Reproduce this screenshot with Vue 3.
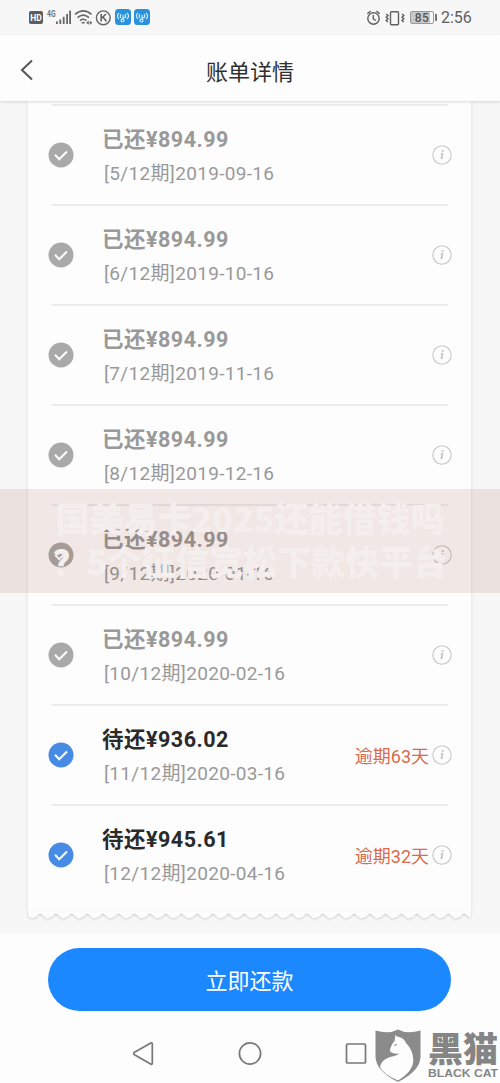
<script setup>
const bills = [
  { n: 5, date: '2019-09-16', amount: '894.99' },
  { n: 6, date: '2019-10-16', amount: '894.99' },
  { n: 7, date: '2019-11-16', amount: '894.99' },
  { n: 8, date: '2019-12-16', amount: '894.99' },
  { n: 9, date: '2020-01-16', amount: '894.99' },
  { n: 10, date: '2020-02-16', amount: '894.99' },
  { n: 11, date: '2020-03-16', amount: '936.02', late: 63 },
  { n: 12, date: '2020-04-16', amount: '945.61', late: 32 },
]
// Perforated lower edge of the bill card
const teeth = Array.from({ length: 28 }, (_, i) => {
  const x = 3 + i * 15.7
  return `Q${x + 4} 8 ${x + 7} 4 Q${x + 9} 1 ${x + 11.5} 4 L${x + 15} 7`
}).join(' ')
const edge = `M0 0 V5 L3 7 ${teeth} L443 5 V0 Z`
</script>

<template>
  <div class="screen">
    <header class="status">
      <svg class="status-left" width="126" height="20" viewBox="0 0 126 20">
        <rect x="1" y="3" width="14" height="13" rx="2" fill="#5c5c5c" />
        <text x="8" y="13" class="hd" text-anchor="middle">HD</text>
        <text x="19" y="9" class="g4" textLength="8.500" lengthAdjust="spacingAndGlyphs">4G</text>
        <g fill="#666">
          <rect x="28" y="13.4" width="1.8" height="2.6" /><rect x="31.4" y="11.5" width="1.8" height="4.5" />
          <rect x="34.8" y="8.8" width="1.8" height="7.2" /><rect x="38.2" y="6" width="1.8" height="10" />
          <rect x="41.2" y="2.6" width="1.8" height="13.4" />
        </g>
        <g fill="none" stroke="#666" stroke-width="1.6">
          <path d="M47 6.500Q55.300-.6 63.500 6.500M49.500 9.600Q55.300 4.500 61 9.600M52 12.600Q55.300 10 58.500 12.600" />
          <path d="M53.700 14.700h3" />
          <path d="M58.500 14.800l2-1.600v3zM64 14.800l-2-1.600v3z" stroke-width=".6" fill="#666" />
          <circle cx="75.300" cy="9.800" r="6.900" stroke-width="1.400" />
          <path d="M73.200 6v7.600M78 6l-4.600 4.300M75 9l3.500 4.600" />
        </g>
        <g v-for="x in [87, 106]" :key="x" :transform="`translate(${x} 1)`">
          <rect width="16" height="16" rx="3.500" fill="#2b91dc" />
          <g fill="none" stroke="#d6efff" stroke-width="1.100">
            <path d="M4 4Q.8 7 4 10M6 5Q4.300 7 6 9M12 4Q15.200 7 12 10M10 5Q11.700 7 10 9" />
            <path d="M8 6v5M8 8l2 1" /><circle cx="7.500" cy="11.500" r="1.500" />
          </g>
        </g>
      </svg>
      <div class="status-right">
        <svg width="39" height="18" viewBox="0 0 39 18" fill="none" stroke="#606060" stroke-width="1.400">
          <circle cx="7.500" cy="9.500" r="5.700" /><path d="M7.300 6v3.800l2.600 1.700M1.300 4.800l3.300-2.700M13.700 4.800l-3.300-2.700" />
          <rect x="24.500" y="2.700" width="8" height="13" rx="1" />
          <path d="M20.200 5l1.800 1.600-1.800 1.600 1.800 1.600-1.800 1.600 1.800 1.600M36 5l1.800 1.600L36 8.200l1.800 1.600-1.800 1.600 1.800 1.600" />
        </svg>
        <span class="battery"><b>85</b></span>
        <span class="clock">2:56</span>
      </div>
    </header>

    <nav class="title-bar">
      <svg class="back" width="14" height="22" viewBox="0 0 14 22"><path d="M12 1.500L2 11l10 9.500" fill="none" stroke="#555" stroke-width="2" /></svg>
      <h1>账单详情</h1>
    </nav>

    <main>
      <section class="card">
        <div v-for="b in bills" :key="b.n" class="bill" :class="{ due: b.late }">
          <svg class="check" width="26" height="26" viewBox="0 0 26 26">
            <circle cx="13" cy="13" r="12.500" />
            <path d="M7 12.800l4.200 4.400 7.800-7.700" fill="none" stroke="#fff" stroke-width="2" />
          </svg>
          <div class="info">
            <div class="amount">{{ b.late ? '待还' : '已还' }}¥{{ b.amount }}</div>
            <div class="date">[{{ b.n }}/12期]{{ b.date }}</div>
          </div>
          <span v-if="b.late" class="late">逾期{{ b.late }}天</span>
          <svg class="tip" width="20" height="20" viewBox="0 0 20 20">
            <circle cx="10" cy="10" r="9.200" fill="none" stroke="#c8c8c8" stroke-width="1.100" />
            <text x="10" y="14" text-anchor="middle">i</text>
          </svg>
        </div>
      </section>
      <svg class="edge" width="443" height="13" viewBox="0 0 443 13"><path :d="edge" fill="#fdfdfd" /></svg>
    </main>

    <footer>
      <button>立即还款</button>
      <div class="keys">
        <svg width="500" height="60" viewBox="0 0 500 60" fill="none" stroke="#777" stroke-width="1.700">
          <path d="M134.500 29.300Q132.700 30.500 134.500 31.700L151 41.200Q152.300 41.700 152.300 40V21Q152.300 19.200 150.800 20Z" />
          <circle cx="250" cy="30.500" r="10.600" />
          <rect x="346.500" y="21" width="19" height="19" rx="1" />
        </svg>
      </div>
    </footer>

    <div class="promo"><p>国美易卡2025还能借钱吗</p><p>？5个征信宽松下款快平台</p></div>

    <div class="brand">
      <svg width="46" height="54" viewBox="0 0 46 54">
        <path d="M.5 1.500Q14 5.500 23 .5Q32 5.500 45.500 1.500V28Q45 42 23 53Q1 42 .5 28Z" fill="#8b8b8b" />
        <path d="M20.500 6Q22 8 24 8Q29 9 31 14Q38 21 38.300 31Q38.500 42 23 51.500Q8 45 5 38Q6 31 15 28Q22 26.500 24.500 24.500Q19 25.500 15.500 23Q14 21.500 15.500 19Q16.500 15 19.500 12Z" fill="#fdfdfd" />
        <path d="M19 16.500l3-1" stroke="#8b8b8b" stroke-width="1" />
      </svg>
      <div class="brand-words">
        <svg width="72" height="35" viewBox="0 0 72 35"><text x="0" y="30" textLength="70" lengthAdjust="spacingAndGlyphs" class="cn">黑猫</text></svg>
        <svg width="72" height="12" viewBox="0 0 72 12"><text x="0" y="9" textLength="70" lengthAdjust="spacingAndGlyphs" class="en">BLACK CAT</text></svg>
      </div>
    </div>
  </div>
</template>

<style>
body { margin: 0; background: #fdfdfd; }
</style>
<style scoped>
.screen { position: relative; width: 500px; height: 1083px; overflow: hidden; display: flex; flex-direction: column; background: #fdfdfd; font-family: Roboto, "Noto Sans CJK SC", sans-serif; }
.status { height: 35px; flex: none; box-sizing: border-box; padding: 0 29px 0 28px; background: #f7f7f7; display: flex; align-items: center; justify-content: space-between; }
.hd { font: bold 8.500px Roboto, sans-serif; fill: #fff; }
.g4 { font: bold 9px Roboto, sans-serif; fill: #707070; }
.status-right { display: flex; align-items: center; }
.battery { position: relative; width: 24px; height: 13px; box-sizing: border-box; border: 1px solid #999; border-radius: 2px; margin: 0 7px 0 5px; background: linear-gradient(90deg, #c9c9c9 85%, #f7f7f7 85%); display: flex; align-items: center; justify-content: center; }
.battery::after { content: ""; position: absolute; right: -4px; top: 2px; width: 2px; height: 7px; background: #777; }
.battery b { font-size: 12px; line-height: 12px; font-weight: 500; color: #555; letter-spacing: .5px; }
.clock { font-size: 16px; color: #606060; line-height: 20px; width: 30px; white-space: nowrap; }
.title-bar { position: relative; z-index: 1; height: 66px; flex: none; background: #fdfdfd; box-shadow: 0 1px 3px rgba(0, 0, 0, .14); display: grid; grid-template-columns: 60px 1fr 60px; align-items: center; }
.back { margin-left: 20px; margin-top: 4px; }
h1 { margin: 9px 0 0; font-size: 22px; line-height: 30px; font-weight: 400; color: #303030; text-align: center; }
main { height: 833px; flex: none; background: #f7f7f7; }
.card { width: 443px; height: 812px; box-sizing: border-box; margin-left: 28px; padding: 3px 23px 0 24px; background: #fdfdfd; box-shadow: 0 0 4px rgba(0, 0, 0, .1); }
.edge { display: block; margin-left: 28px; position: relative; top: -2px; filter: drop-shadow(0 1px 1px rgba(0, 0, 0, .16)); }
.bill { height: 100px; box-sizing: border-box; border-top: 2px solid #ececec; display: flex; align-items: center; }
.check { flex: none; margin-left: -4px; fill: #a9a9a9; }
.due .check { fill: #478be4; }
.info { margin-left: 28px; flex: 1; }
.amount { font-size: 21.500px; line-height: 32px; font-weight: 700; color: #999; white-space: nowrap; letter-spacing: .5px; }
.due .amount { color: #2a2a2a; }
.date { position: relative; top: 1px; font-size: 19px; line-height: 26px; margin: 4px 0 0 2px; color: #999; white-space: nowrap; letter-spacing: .32px; }
.late { font-size: 18px; line-height: 24px; color: #d96a4c; margin-right: 3px; padding-top: 4px; }
.tip { flex: none; margin-right: -4px; }
.tip text { font: italic bold 12px "Liberation Serif", serif; fill: #c0c0c0; }
footer { flex: 1; }
button { display: block; width: 403px; height: 63px; margin: 14px 0 0 48px; padding: 0 0 1px; border: 0; border-radius: 32px; background: #1b88ff; color: #fff; font: 22px Roboto, "Noto Sans CJK SC", sans-serif; }
.keys { margin-top: 12px; }
.keys svg { display: block; }
.promo { position: absolute; z-index: 2; left: 0; top: 489px; width: 500px; height: 104px; box-sizing: border-box; padding-top: 7px; background: rgba(133, 43, 23, .1); text-align: center; }
.promo p { margin: 0; font: 900 34px/43px "Noto Sans CJK SC", sans-serif; color: #f4eeed; white-space: nowrap; }
.brand { position: absolute; z-index: 3; left: 375px; top: 1029px; display: flex; gap: 7px; }
.brand-words svg { display: block; }
.cn { font: 900 35px "Noto Sans CJK SC", sans-serif; fill: #858585; }
.en { font: bold 11px "Liberation Sans", sans-serif; fill: #858585; }
.brand-words { padding-top: 3px; display: flex; flex-direction: column; gap: 1px; }
</style>
